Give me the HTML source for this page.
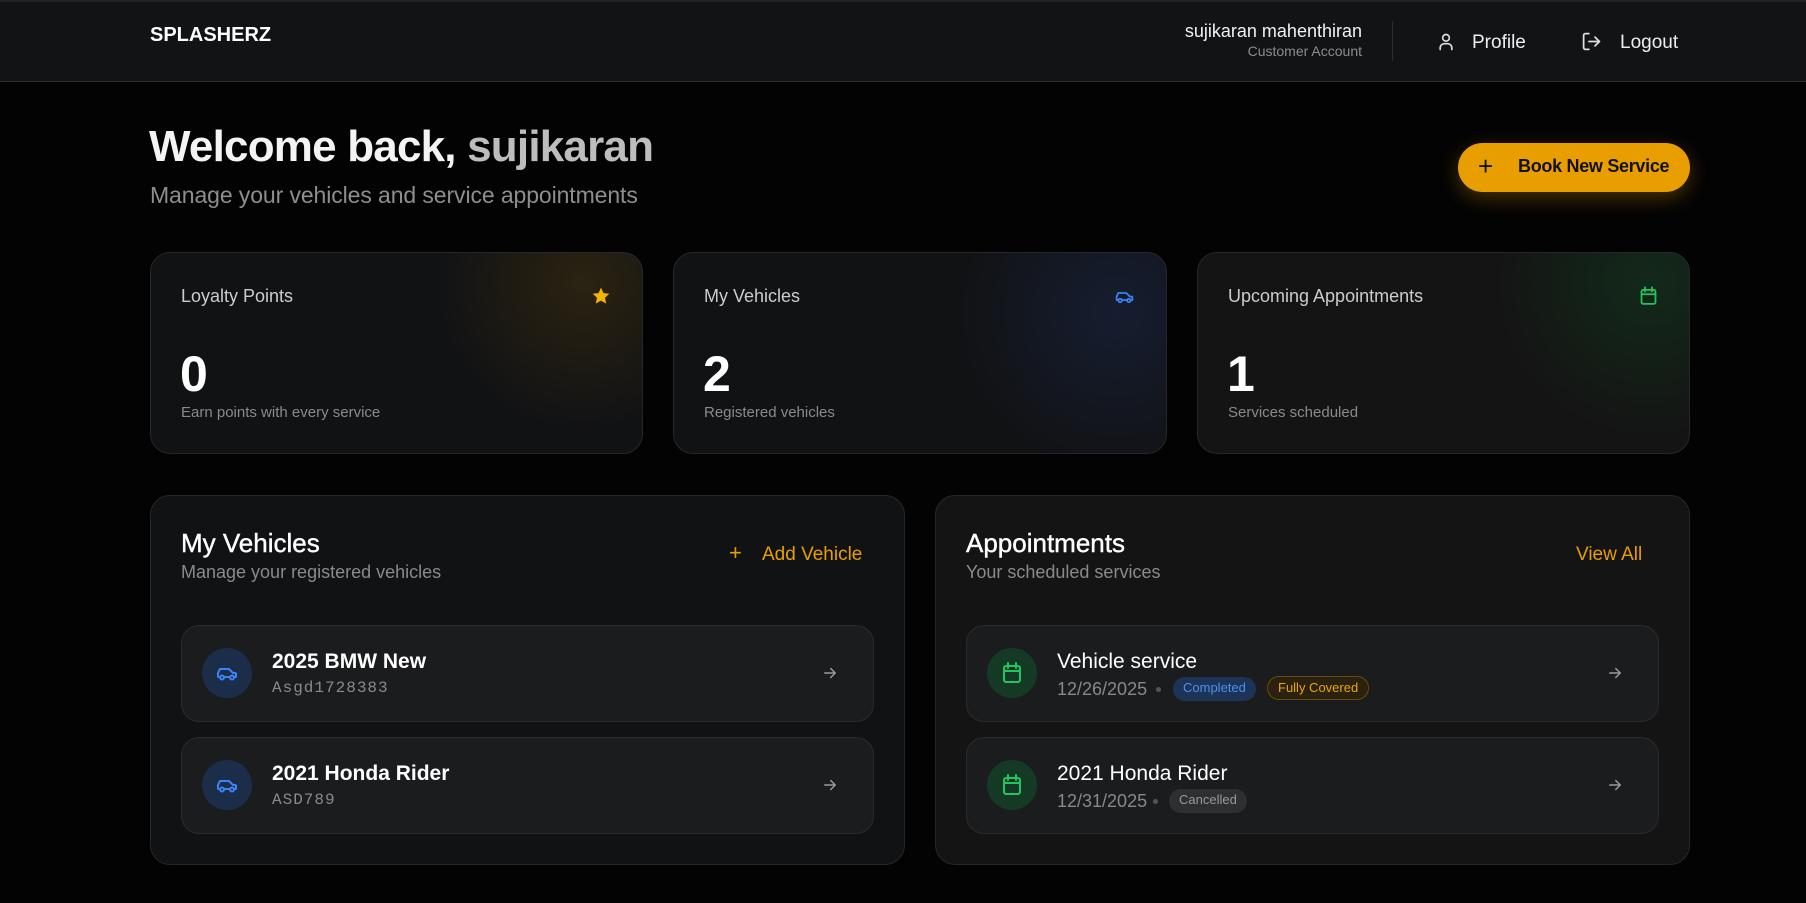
<!DOCTYPE html>
<html><head><meta charset="utf-8"><style>
*{box-sizing:border-box;margin:0;padding:0}
body{width:1806px;height:903px;background:#030304;font-family:"Liberation Sans",sans-serif;color:#fff;position:relative;overflow:hidden}
.abs{position:absolute}
.hdr{left:0;top:0;width:1806px;height:82px;background:#121315;border-bottom:1px solid #2a2b2e;border-top:2px solid #222}
.card{border:1px solid #26272a;border-radius:20px;background:#111214;overflow:hidden}
.item{border:1px solid #2a2b2e;border-radius:18px;background:#1b1c1e}
.circ{width:50px;height:50px;border-radius:50%;display:flex;align-items:center;justify-content:center}
.badge{border-radius:12px;font-size:13px;height:24px;line-height:22px;padding:0 10px}
</style></head><body>
<div class="abs hdr"></div>
<div class="abs" style="left:150px;top:24px;font-size:20px;font-weight:bold;letter-spacing:0px">SPLASHERZ</div>
<div class="abs" style="right:444px;top:21px;font-size:18px;text-align:right;color:#f2f2f2">sujikaran mahenthiran</div>
<div class="abs" style="right:444px;top:43px;font-size:14px;text-align:right;color:#8c8c8c">Customer Account</div>
<div class="abs" style="left:1392px;top:21px;width:1px;height:40px;background:#2c2d30"></div>
<svg class="abs" style="left:1436px;top:32px" width="20" height="20" viewBox="0 0 24 24" fill="none" stroke="#ddd" stroke-width="2" stroke-linecap="round"><circle cx="12" cy="7" r="4"/><path d="M5 21v-2a5 5 0 0 1 5-5h4a5 5 0 0 1 5 5v2"/></svg>
<div class="abs" style="left:1472px;top:32px;font-size:19px;color:#eee">Profile</div>
<svg class="abs" style="left:1581px;top:31px" width="21" height="21" viewBox="0 0 24 24" fill="none" stroke="#ddd" stroke-width="2" stroke-linecap="round" stroke-linejoin="round"><path d="M9 21H5a2 2 0 0 1-2-2V5a2 2 0 0 1 2-2h4"/><path d="M16 17l5-5-5-5"/><path d="M21 12H9"/></svg>
<div class="abs" style="left:1620px;top:32px;font-size:19px;color:#eee">Logout</div>

<div class="abs" style="left:149px;top:122px;font-size:44px;font-weight:bold;letter-spacing:-0.8px;color:#f4f4f4">Welcome back, <span style="color:#bdbdbd">sujikaran</span></div>
<div class="abs" style="left:150px;top:182px;font-size:23px;color:#8e8e8e;letter-spacing:-0.1px">Manage your vehicles and service appointments</div>

<div class="abs" style="left:1458px;top:143px;width:232px;height:49px;border-radius:25px;background:#e99e00;box-shadow:0 6px 20px rgba(233,158,0,0.3)"></div>
<div class="abs" style="left:1478px;top:153px;font-size:26px;color:#111;line-height:26px">+</div>
<div class="abs" style="left:1518px;top:156px;font-size:18px;font-weight:bold;color:#111;letter-spacing:-0.3px">Book New Service</div>

<div class="abs card" style="left:150px;top:252px;width:493px;height:202px;background:radial-gradient(circle at 88% 15%,rgba(120,85,10,0.25),transparent 32%),#111214"></div>
<div class="abs card" style="left:673px;top:252px;width:494px;height:202px;background:radial-gradient(circle at 90% 30%,rgba(30,50,100,0.35),transparent 35%),#111214"></div>
<div class="abs card" style="left:1197px;top:252px;width:493px;height:202px;background:radial-gradient(circle at 92% 15%,rgba(15,90,40,0.3),transparent 32%),#141414"></div>

<div class="abs" style="left:181px;top:286px;font-size:18px;color:#ccc">Loyalty Points</div>
<div class="abs" style="left:704px;top:286px;font-size:18px;color:#ccc">My Vehicles</div>
<div class="abs" style="left:1228px;top:286px;font-size:18px;color:#ccc">Upcoming Appointments</div>
<svg class="abs" style="left:591px;top:286px" width="20" height="20" viewBox="0 0 24 24"><path d="M12 2l3 6.5 7 .8-5.2 4.8 1.5 7L12 17.6 5.7 21.1l1.5-7L2 9.3l7-.8z" fill="#f5b400"/></svg>
<svg class="abs" style="left:1114px;top:286px" width="21" height="21" viewBox="0 0 24 24" fill="none" stroke="#3b82f6" stroke-width="2" stroke-linecap="round" stroke-linejoin="round"><path d="M3 16V12l2-4h9l4 4h2a1 1 0 0 1 1 1v3h-2"/><path d="M9 16h6"/><path d="M5 16H3"/><circle cx="7" cy="16.5" r="2"/><circle cx="17" cy="16.5" r="2"/></svg>
<svg class="abs" style="left:1638px;top:285px" width="21" height="22" viewBox="0 0 24 24" fill="none" stroke="#22c55e" stroke-width="2" stroke-linecap="round"><rect x="4" y="5" width="16" height="16" rx="2"/><path d="M8 2v5M16 2v5M4 10h16"/></svg>

<div class="abs" style="left:180px;top:345px;font-size:50px;font-weight:bold">0</div>
<div class="abs" style="left:703px;top:345px;font-size:50px;font-weight:bold">2</div>
<div class="abs" style="left:1227px;top:345px;font-size:50px;font-weight:bold">1</div>
<div class="abs" style="left:181px;top:404px;font-size:15px;color:#8a8a8a">Earn points with every service</div>
<div class="abs" style="left:704px;top:404px;font-size:15px;color:#8a8a8a">Registered vehicles</div>
<div class="abs" style="left:1228px;top:404px;font-size:15px;color:#8a8a8a">Services scheduled</div>

<div class="abs card" style="left:150px;top:495px;width:755px;height:370px"></div>
<div class="abs card" style="left:935px;top:495px;width:755px;height:370px;background:#141415"></div>

<div class="abs" style="left:181px;top:528px;font-size:26px;font-weight:500;-webkit-text-stroke:0.4px #fff">My Vehicles</div>
<div class="abs" style="left:181px;top:562px;font-size:18px;color:#8a8a8a">Manage your registered vehicles</div>
<div class="abs" style="left:729px;top:542px;font-size:22px;color:#e99e00;line-height:22px">+</div>
<div class="abs" style="left:762px;top:544px;font-size:19px;color:#e99e00">Add Vehicle</div>

<div class="abs" style="left:966px;top:528px;font-size:26px;-webkit-text-stroke:0.4px #fff">Appointments</div>
<div class="abs" style="left:966px;top:562px;font-size:18px;color:#8a8a8a">Your scheduled services</div>
<div class="abs" style="left:1576px;top:544px;font-size:19px;color:#e99e00">View All</div>

<div class="abs item" style="left:181px;top:625px;width:693px;height:97px"></div>
<div class="abs item" style="left:181px;top:737px;width:693px;height:97px"></div>
<div class="abs circ" style="left:202px;top:648px;background:#1c2d4a"><svg width="24" height="24" viewBox="0 0 24 24" fill="none" stroke="#3b82f6" stroke-width="2" stroke-linecap="round" stroke-linejoin="round"><path d="M3 16V12l2-4h9l4 4h2a1 1 0 0 1 1 1v3h-2"/><path d="M9 16h6"/><circle cx="7" cy="16.5" r="2"/><circle cx="17" cy="16.5" r="2"/></svg></div>
<div class="abs circ" style="left:202px;top:760px;background:#1c2d4a"><svg width="24" height="24" viewBox="0 0 24 24" fill="none" stroke="#3b82f6" stroke-width="2" stroke-linecap="round" stroke-linejoin="round"><path d="M3 16V12l2-4h9l4 4h2a1 1 0 0 1 1 1v3h-2"/><path d="M9 16h6"/><circle cx="7" cy="16.5" r="2"/><circle cx="17" cy="16.5" r="2"/></svg></div>
<div class="abs" style="left:272px;top:650px;font-size:21px;font-weight:bold">2025 BMW New</div>
<div class="abs" style="left:272px;top:679px;font-size:16px;color:#8a8a8a;font-family:'Liberation Mono',monospace;letter-spacing:1px">Asgd1728383</div>
<div class="abs" style="left:272px;top:762px;font-size:21px;font-weight:bold">2021 Honda Rider</div>
<div class="abs" style="left:272px;top:791px;font-size:16px;color:#8a8a8a;font-family:'Liberation Mono',monospace;letter-spacing:1px">ASD789</div>

<div class="abs item" style="left:966px;top:625px;width:693px;height:97px"></div>
<div class="abs item" style="left:966px;top:737px;width:693px;height:97px"></div>
<div class="abs circ" style="left:987px;top:648px;background:#143a25"><svg width="24" height="24" viewBox="0 0 24 24" fill="none" stroke="#22c55e" stroke-width="2" stroke-linecap="round"><rect x="4" y="5" width="16" height="16" rx="2"/><path d="M8 2v5M16 2v5M4 10h16"/></svg></div>
<div class="abs circ" style="left:987px;top:760px;background:#143a25"><svg width="24" height="24" viewBox="0 0 24 24" fill="none" stroke="#22c55e" stroke-width="2" stroke-linecap="round"><rect x="4" y="5" width="16" height="16" rx="2"/><path d="M8 2v5M16 2v5M4 10h16"/></svg></div>
<div class="abs" style="left:1057px;top:650px;font-size:21px">Vehicle service</div>
<div class="abs" style="left:1057px;top:679px;font-size:18px;color:#888">12/26/2025</div>
<div class="abs" style="left:1156px;top:687px;width:5px;height:5px;border-radius:50%;background:#555"></div>
<div class="abs badge" style="left:1173px;top:677px;background:#1d3358;color:#4e8ff0">Completed</div>
<div class="abs badge" style="left:1267px;top:676px;border:1px solid #6a4a0a;background:#2a2110;color:#e9a800">Fully Covered</div>
<div class="abs" style="left:1057px;top:762px;font-size:21px">2021 Honda Rider</div>
<div class="abs" style="left:1057px;top:791px;font-size:18px;color:#888">12/31/2025</div>
<div class="abs" style="left:1153px;top:799px;width:5px;height:5px;border-radius:50%;background:#555"></div>
<div class="abs badge" style="left:1169px;top:789px;background:#2e2f31;color:#999">Cancelled</div>

<svg class="abs" style="left:821px;top:664px" width="18" height="18" viewBox="0 0 24 24" fill="none" stroke="#999" stroke-width="2" stroke-linecap="round" stroke-linejoin="round"><path d="M5 12h14M13 6l6 6-6 6"/></svg>
<svg class="abs" style="left:821px;top:776px" width="18" height="18" viewBox="0 0 24 24" fill="none" stroke="#999" stroke-width="2" stroke-linecap="round" stroke-linejoin="round"><path d="M5 12h14M13 6l6 6-6 6"/></svg>
<svg class="abs" style="left:1606px;top:664px" width="18" height="18" viewBox="0 0 24 24" fill="none" stroke="#999" stroke-width="2" stroke-linecap="round" stroke-linejoin="round"><path d="M5 12h14M13 6l6 6-6 6"/></svg>
<svg class="abs" style="left:1606px;top:776px" width="18" height="18" viewBox="0 0 24 24" fill="none" stroke="#999" stroke-width="2" stroke-linecap="round" stroke-linejoin="round"><path d="M5 12h14M13 6l6 6-6 6"/></svg>
</body></html>
